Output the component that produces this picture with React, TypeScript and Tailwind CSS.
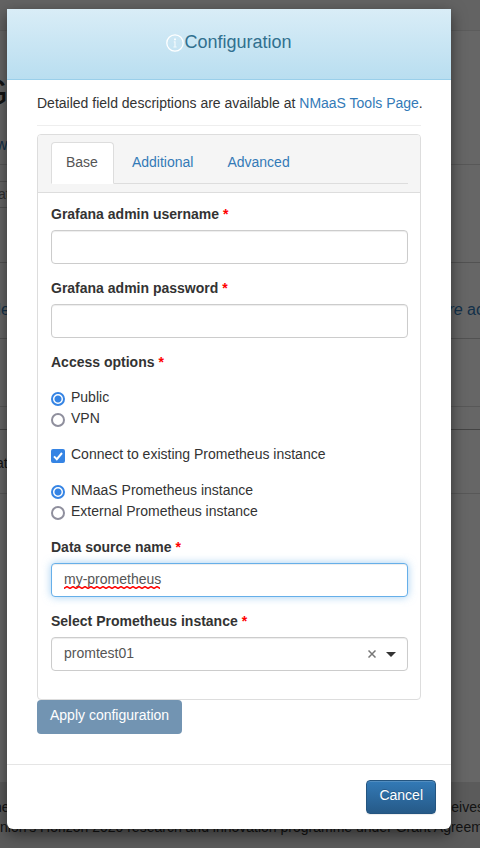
import React from "react";

const inputBase =
  "block h-[34px] w-full rounded border bg-white px-3 text-sm text-[#555] outline-none";
const inputIdle = "border-[#ccc] shadow-[inset_0_1px_1px_rgba(0,0,0,0.075)]";
const inputFocused =
  "border-[#66afe9] shadow-[inset_0_1px_1px_rgba(0,0,0,0.075),0_0_8px_rgba(102,175,233,0.6)]";

function Required() {
  return <span className="text-[#f00]">*</span>;
}

function FieldLabel({ htmlFor, children }: { htmlFor: string; children: React.ReactNode }) {
  return (
    <label htmlFor={htmlFor} className="mb-1.5 block text-sm leading-5 font-bold">
      {children} <Required />
    </label>
  );
}

function Radio({ name, label, checked }: { name: string; label: string; checked?: boolean }) {
  return (
    <label className="flex h-[21px] items-start text-sm leading-5">
      <input
        type="radio"
        name={name}
        defaultChecked={checked}
        className="mt-[5px] mr-1.5 size-3.5 shrink-0 appearance-none rounded-full border-2 border-[#8f8f9d] bg-white checked:border-[#3584e4] checked:bg-[radial-gradient(circle,#3584e4_3px,white_4px)]"
      />
      {label}
    </label>
  );
}

function PageBehind() {
  return (
    <div
      aria-hidden="true"
      className="flex min-h-screen min-w-0 flex-col overflow-hidden whitespace-nowrap bg-white [grid-area:1/1]"
    >
      <div className="h-[31px] shrink-0 border-b border-[#e7e7e7] bg-[#f8f8f8]" />
      <div className="flex h-[134px] shrink-0 flex-col border-b border-[#ddd]">
        <div className="mt-10 -ml-5 text-4xl leading-11">Grafana</div>
        <div className="mt-5 -ml-1 text-base leading-5 text-[#337ab7]">www</div>
      </div>
      <div className="mt-4 h-[27px] w-1/2 shrink-0 border-y border-[#ccc] text-sm leading-6 text-[#777]">
        <span className="-ml-0.5">at</span>
      </div>
      <div className="h-[55px] shrink-0 border-b border-[#ccc]" />
      <div className="flex h-[76px] shrink-0 items-center justify-between border-b border-[#ccc] pt-[18px] text-base text-[#337ab7]">
        <span className="-ml-2">de</span>
        <span className="-mr-1">
          <i>more</i> ac
        </span>
      </div>
      <div className="h-[68px] shrink-0 border-b border-[#ddd]" />
      <div className="h-[23px] shrink-0 border-b border-[#aaa]" />
      <div className="h-16 shrink-0 border-b border-[#ddd] pt-[23px] text-sm leading-5">
        <span className="-ml-1">at</span>
      </div>
      <div className="grow" />
      <footer className="h-[66px] shrink-0 bg-[#e4e4e4] pt-[15px] text-sm leading-5">
        <div className="flex justify-between">
          <span className="-ml-1.5">ne</span>
          <span className="-mr-1">receives</span>
        </div>
        <div>nion's Horizon 2020 research and innovation programme under Grant Agreement</div>
      </footer>
    </div>
  );
}

export default function App() {
  return (
    <div className="grid min-h-screen grid-cols-1 overflow-hidden font-['Liberation_Sans',Arial,sans-serif] text-[#333]">
      <PageBehind />
      <div className="z-10 bg-black/60 pt-[9px] pr-[29px] pb-[19px] pl-[7px] [grid-area:1/1]">
        <div
          role="dialog"
          aria-labelledby="dialog-title"
          className="rounded-b-md bg-white shadow-[0_5px_15px_rgba(0,0,0,0.5)]"
        >
          <header className="flex items-center justify-center border-b border-[#9acfea] bg-linear-to-b from-[#d9edf7] to-[#b9def0] pt-5 pb-6">
            <svg className="mt-0.5 size-[18px]" viewBox="0 0 18 18" fill="none" aria-hidden="true">
              <circle cx="9" cy="9" r="8.2" stroke="white" strokeWidth="1.3" />
              <path d="M9 4.4v1.8" stroke="white" strokeWidth="1.8" />
              <path d="M7.8 7.8H9V13M7.4 13h3.2" stroke="white" strokeOpacity="0.75" strokeWidth="1.2" />
            </svg>
            <h4 id="dialog-title" className="text-lg leading-[26px] text-[#31708f]">
              Configuration
            </h4>
          </header>

          <div className="px-[30px] pt-[13px] pb-[30px]">
            <p className="text-sm leading-5 whitespace-nowrap">
              Detailed field descriptions are available at{" "}
              <a href="#tools" className="text-[#337ab7]">
                NMaaS Tools Page
              </a>
              .
            </p>
            <hr className="mt-3 mb-2 border-[#eee]" />

            <section className="rounded border border-[#ddd]">
              <div className="rounded-t-[3px] border-b border-[#ddd] bg-[#f5f5f5] pt-[7px] pr-3 pb-2 pl-[13px]">
                <nav className="flex gap-0.5 border-b border-[#ddd] text-sm leading-5">
                  <a
                    href="#base"
                    className="-mb-px rounded-t border border-b-white border-[#ddd] bg-white pt-[9px] pr-[15px] pb-[11px] pl-3.5 text-[#555]"
                  >
                    Base
                  </a>
                  <a href="#additional" className="px-4 pt-2.5 pb-[11px] text-[#337ab7]">
                    Additional
                  </a>
                  <a href="#advanced" className="px-4 pt-2.5 pb-[11px] text-[#337ab7]">
                    Advanced
                  </a>
                </nav>
              </div>

              <form className="pt-[11px] pr-3 pb-7 pl-[13px]" onSubmit={(e) => e.preventDefault()}>
                <div className="mb-3.5">
                  <FieldLabel htmlFor="username">Grafana admin username</FieldLabel>
                  <input id="username" type="text" className={`${inputBase} ${inputIdle}`} />
                </div>
                <div className="mb-3.5">
                  <FieldLabel htmlFor="password">Grafana admin password</FieldLabel>
                  <input id="password" type="password" className={`${inputBase} ${inputIdle}`} />
                </div>

                <fieldset className="mb-[15px]">
                  <legend className="mb-[15px] text-sm leading-5 font-bold">
                    Access options <Required />
                  </legend>
                  <Radio name="access" label="Public" checked />
                  <Radio name="access" label="VPN" />
                </fieldset>

                <label className="mb-[15px] flex h-[21px] items-start text-sm leading-5">
                  <span className="relative mt-[5px] mr-1.5 size-3.5 shrink-0">
                    <input
                      type="checkbox"
                      defaultChecked
                      className="peer block size-3.5 appearance-none rounded-xs border-2 border-[#8f8f9d] checked:border-[#3584e4] checked:bg-[#3584e4]"
                    />
                    <svg
                      className="pointer-events-none absolute inset-0 hidden size-3.5 peer-checked:block"
                      viewBox="0 0 14 14"
                      fill="none"
                      aria-hidden="true"
                    >
                      <path d="M3 7.4l2.8 2.8L11 4" stroke="white" strokeWidth="2" />
                    </svg>
                  </span>
                  Connect to existing Prometheus instance
                </label>

                <fieldset className="mb-[15px]">
                  <Radio name="instance-kind" label="NMaaS Prometheus instance" checked />
                  <Radio name="instance-kind" label="External Prometheus instance" />
                </fieldset>

                <div className="mb-3.5">
                  <FieldLabel htmlFor="source">Data source name</FieldLabel>
                  <div className="relative">
                    <input
                      id="source"
                      type="text"
                      spellCheck={false}
                      defaultValue="my-prometheus"
                      className={`${inputBase} ${inputFocused} pb-0.5`}
                    />
                    <svg
                      className="pointer-events-none absolute top-[23px] left-[13px] h-[3px] w-24"
                      aria-hidden="true"
                    >
                      <defs>
                        <pattern id="squiggle" width="6" height="3" patternUnits="userSpaceOnUse">
                          <path
                            d="M-3 0.6L0 2.4L3 0.6L6 2.4L9 0.6"
                            stroke="#f00"
                            strokeWidth="1.5"
                            fill="none"
                          />
                        </pattern>
                      </defs>
                      <rect width="96" height="3" fill="url(#squiggle)" />
                    </svg>
                  </div>
                </div>

                <div>
                  <FieldLabel htmlFor="prometheus">Select Prometheus instance</FieldLabel>
                  <div className="relative">
                    <select
                      id="prometheus"
                      className={`${inputBase} ${inputIdle} appearance-none pb-0.5`}
                      defaultValue="promtest01"
                    >
                      <option>promtest01</option>
                    </select>
                    <button
                      type="button"
                      aria-label="Clear"
                      className="absolute inset-y-0 right-8 flex w-2 items-center text-[#777]"
                    >
                      <svg className="size-2" viewBox="0 0 8 8" aria-hidden="true">
                        <path d="M.5.5l7 7M7.5.5l-7 7" stroke="currentColor" strokeWidth="1.5" />
                      </svg>
                    </button>
                    <svg
                      className="pointer-events-none absolute top-[15px] right-3 h-[5px] w-2.5"
                      viewBox="0 0 10 5"
                      aria-hidden="true"
                    >
                      <path d="M0 0h10L5 5z" fill="#333" />
                    </svg>
                  </div>
                </div>
              </form>
            </section>

            <button
              type="button"
              disabled
              className="block h-[34px] rounded bg-[#7294b2] px-[13px] pb-1 text-sm text-white"
            >
              Apply configuration
            </button>
          </div>

          <footer className="flex justify-end border-t border-[#e5e5e5] p-[15px]">
            <button
              type="button"
              className="h-[34px] rounded border border-[#245580] bg-linear-to-b from-[#337ab7] to-[#265a88] px-3 pb-1 text-sm text-white shadow-[inset_0_1px_0_rgba(255,255,255,0.15),0_1px_1px_rgba(0,0,0,0.075)] [text-shadow:0_-1px_0_rgba(0,0,0,0.2)]"
            >
              Cancel
            </button>
          </footer>
        </div>
      </div>
    </div>
  );
}
